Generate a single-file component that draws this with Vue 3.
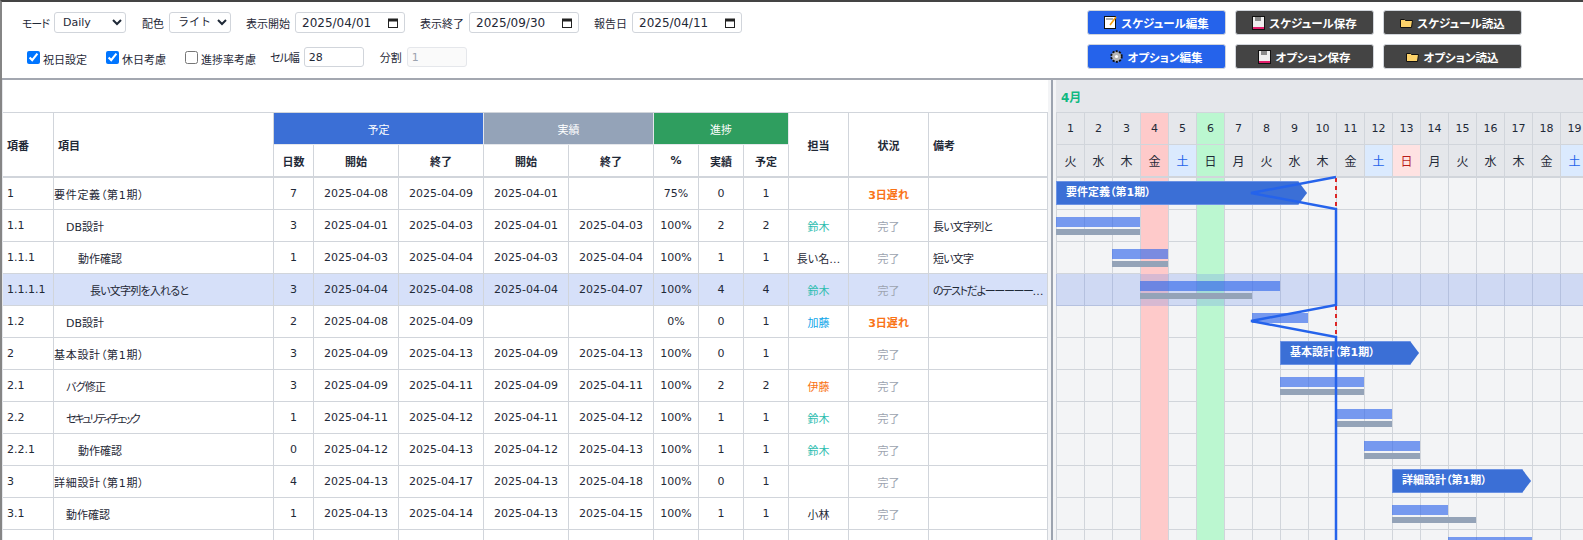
<template>
  <div class="app">
    <header class="toolbar">
      <div class="controls">
        <div class="row">
          <label class="lbl mode-lbl">モード</label>
          <select class="sel mode"><option>Daily</option></select>
          <label class="lbl">配色</label>
          <select class="sel theme"><option>ライト</option></select>
          <template v-for="d in dates" :key="d.label">
            <label class="lbl">{{ d.label }}</label>
            <span class="date">
              <input class="inp" type="text" :value="d.value">
              <svg class="cal" viewBox="0 0 10 10" width="10" height="10">
                <rect x="0.5" y="1" width="9" height="8.5" fill="none" stroke="#222" />
                <rect x="0.5" y="1" width="9" height="2.5" fill="#222" />
              </svg>
            </span>
          </template>
        </div>
        <div class="row row2">
          <label class="chk"><input type="checkbox" checked>祝日設定</label>
          <label class="chk"><input type="checkbox" checked>休日考慮</label>
          <label class="chk"><input type="checkbox">進捗率考慮</label>
          <label class="lbl cell-lbl">セル幅</label>
          <input class="inp num-inp" type="text" value="28">
          <label class="lbl split-lbl">分割</label>
          <input class="inp num-inp off" type="text" value="1" disabled>
        </div>
      </div>
      <div class="actions">
        <button v-for="b in buttons" :key="b.text" class="btn" :class="b.cls">
          <svg v-if="b.icon === 'memo'" viewBox="0 0 13 13" width="13" height="13">
            <rect x="0.5" y="0.5" width="11" height="12" fill="#fff" stroke="#111" />
            <path d="M2 3h7" stroke="#999" stroke-width="1.5" />
            <path d="M12 1L6 9" stroke="#f59e0b" stroke-width="1.5" />
          </svg>
          <svg v-else-if="b.icon === 'gear'" viewBox="0 0 13 13" width="13" height="13">
            <circle cx="6.5" cy="6.5" r="5.2" fill="#aaa" stroke="#111" stroke-width="2" stroke-dasharray="2 1.3" />
            <circle cx="6.5" cy="6.5" r="4.2" fill="#b5b5b5" />
            <circle cx="6.5" cy="6.5" r="1.6" fill="#fff" />
          </svg>
          <svg v-else-if="b.icon === 'save'" viewBox="0 0 13 14" width="13" height="14">
            <rect x="0.5" y="0.5" width="12" height="13" fill="#eee" stroke="#111" />
            <rect x="3" y="1" width="6" height="4" fill="#8a8a8a" />
            <rect x="1" y="11" width="11" height="2" fill="#e11d6b" />
          </svg>
          <svg v-else viewBox="0 0 13 10" width="13" height="10">
            <path d="M0.5 1.5h4l1 1h7l-1 7h-11z" fill="#fcd26a" stroke="#111" />
          </svg>
          <span>{{ b.text }}</span>
        </button>
      </div>
    </header>

    <main class="main">
      <div class="table-pane">
        <table class="tbl">
          <colgroup>
            <col v-for="(w, i) in colWidths" :key="i" :style="{ width: w + 'px' }">
          </colgroup>
          <thead>
            <tr class="blank"><th colspan="14"></th></tr>
            <tr>
              <th rowspan="2" class="left">項番</th>
              <th rowspan="2" class="left">項目</th>
              <th colspan="3" class="grp plan">予定</th>
              <th colspan="2" class="grp actual">実績</th>
              <th colspan="3" class="grp prog">進捗</th>
              <th rowspan="2" class="last-h">担当</th>
              <th rowspan="2" class="last-h">状況</th>
              <th rowspan="2" class="left last-h">備考</th>
            </tr>
            <tr class="sub">
              <th>日数</th><th>開始</th><th>終了</th><th>開始</th><th>終了</th>
              <th>%</th><th>実績</th><th>予定</th>
            </tr>
          </thead>
          <tbody>
            <tr v-for="r in rows" :key="r.no" :class="{ picked: r.picked }">
              <td class="num no">{{ r.no }}</td>
              <td class="name" :class="r.nameCls" :style="{ paddingLeft: r.level * 12 + 'px' }">{{ r.name }}</td>
              <td class="num c">{{ r.days }}</td>
              <td class="num c">{{ r.ps }}</td>
              <td class="num c">{{ r.pe }}</td>
              <td class="num c">{{ r.as }}</td>
              <td class="num c">{{ r.ae }}</td>
              <td class="num c">{{ r.pct }}</td>
              <td class="num c">{{ r.act }}</td>
              <td class="num c">{{ r.plan }}</td>
              <td class="c" :class="r.ownerCls">{{ r.owner }}</td>
              <td class="c" :class="r.late ? 'late' : 'done'">{{ r.status }}</td>
              <td class="note" :class="r.picked ? 'note-long' : 'tight'">{{ r.note }}</td>
            </tr>
            <tr><td v-for="n in 13" :key="n"></td></tr>
          </tbody>
        </table>
      </div>

      <div class="splitter"></div>

      <section class="gantt">
        <div class="month"><span>4月</span></div>
        <div class="days">
          <div v-for="d in days" :key="d.n" class="day" :class="d.holiday">{{ d.n }}</div>
        </div>
        <div class="weeks">
          <div v-for="d in days" :key="d.n" class="wd" :class="d.holiday || d.weekend">{{ d.w }}</div>
        </div>
        <div class="body">
          <div v-for="n in 12" :key="n" class="grow">
            <div v-for="d in days" :key="d.n" class="gcell"></div>
          </div>
          <div class="col col-red"></div>
          <div class="col col-green"></div>
          <div class="pick-row"></div>

          <template v-for="b in bars" :key="b.row">
            <div
              v-if="b.summary"
              class="summary"
              :style="{ top: b.row * 32 + 3 + 'px', left: b.x * 28 + 'px', width: b.w * 28 - 1 + 'px' }"
            >{{ b.summary }}</div>
            <template v-else>
              <div class="bar" :style="{ top: b.row * 32 + 7 + 'px', left: b.x * 28 + 'px', width: b.w * 28 + 'px' }"></div>
              <div
                v-if="b.aw"
                class="bar-act"
                :style="{ top: b.row * 32 + 19 + 'px', left: b.x * 28 + 'px', width: b.aw * 28 + 'px' }"
              ></div>
            </template>
          </template>

          <svg class="lag" width="527" height="362">
            <line x1="280" y1="0" x2="280" y2="362" stroke="#dc2626" stroke-width="2" stroke-dasharray="4 4" />
            <polyline
              points="280,-1 195,15 280,31 280,127 195,143 280,159 280,362"
              fill="none"
              stroke="#2563eb"
              stroke-width="2.5"
            />
          </svg>
        </div>
      </section>
    </main>
  </div>
</template>

<script setup>
const dates = [
  { label: '表示開始', value: '2025/04/01' },
  { label: '表示終了', value: '2025/09/30' },
  { label: '報告日', value: '2025/04/11' }
]

const buttons = [
  { text: 'スケジュール編集', icon: 'memo', cls: 'blue' },
  { text: 'スケジュール保存', icon: 'save', cls: 'dark' },
  { text: 'スケジュール読込', icon: 'open', cls: 'dark' },
  { text: 'オプション編集', icon: 'gear', cls: 'blue' },
  { text: 'オプション保存', icon: 'save', cls: 'dark' },
  { text: 'オプション読込', icon: 'open', cls: 'dark' }
]

const colWidths = [51, 220, 40, 85, 85, 85, 85, 45, 45, 45, 60, 80, 119]

const d = s => (s ? '2025-04-' + s : '')
const row = (no, level, name, days, ps, pe, as, ae, pct, act, plan, owner, ownerCls, late, note = '', picked = false, nameCls = '') => ({
  no, level, name, days, ps: d(ps), pe: d(pe), as: d(as), ae: d(ae), pct, act, plan,
  owner, ownerCls, late, status: late ? '3日遅れ' : '完了', note, picked, nameCls
})

const rows = [
  row('1', 0, '要件定義（第1期）', 7, '08', '09', '01', '', '75%', 0, 1, '', '', true, '', false, 'wide'),
  row('1.1', 1, 'DB設計', 3, '01', '03', '01', '03', '100%', 2, 2, '鈴木', 'teal', false, '長い文字列と'),
  row('1.1.1', 2, '動作確認', 1, '03', '04', '03', '04', '100%', 1, 1, '長い名…', '', false, '短い文字'),
  row('1.1.1.1', 3, '長い文字列を入れると', 3, '04', '08', '04', '07', '100%', 4, 4, '鈴木', 'teal', false, 'のテストだよーーーーー…', true, 'tight'),
  row('1.2', 1, 'DB設計', 2, '08', '09', '', '', '0%', 0, 1, '加藤', 'sky', true),
  row('2', 0, '基本設計（第1期）', 3, '09', '13', '09', '13', '100%', 0, 1, '', '', false, '', false, 'wide'),
  row('2.1', 1, 'バグ修正', 3, '09', '11', '09', '11', '100%', 2, 2, '伊藤', 'orange', false, '', false, 'tight'),
  row('2.2', 1, 'セキュリティチェック', 1, '11', '12', '11', '12', '100%', 1, 1, '鈴木', 'teal', false, '', false, 'tighter'),
  row('2.2.1', 2, '動作確認', 0, '12', '13', '12', '13', '100%', 1, 1, '鈴木', 'teal', false),
  row('3', 0, '詳細設計（第1期）', 4, '13', '17', '13', '18', '100%', 0, 1, '', '', false, '', false, 'wide'),
  row('3.1', 1, '動作確認', 1, '13', '14', '13', '15', '100%', 1, 1, '小林', '', false)
]

const names = ['火', '水', '木', '金', '土', '日', '月']
const days = Array.from({ length: 19 }, (_, i) => {
  const n = i + 1
  const w = names[i % 7]
  return {
    n,
    w,
    holiday: n === 4 ? 'red' : n === 6 ? 'green' : '',
    weekend: w === '土' ? 'sat' : w === '日' ? 'sun' : ''
  }
})

const bars = [
  { row: 0, x: 0, w: 9, summary: '要件定義（第1期）' },
  { row: 1, x: 0, w: 3, aw: 3 },
  { row: 2, x: 2, w: 2, aw: 2 },
  { row: 3, x: 3, w: 5, aw: 4 },
  { row: 4, x: 7, w: 2 },
  { row: 5, x: 8, w: 5, summary: '基本設計（第1期）' },
  { row: 6, x: 8, w: 3, aw: 3 },
  { row: 7, x: 10, w: 2, aw: 2 },
  { row: 8, x: 11, w: 2, aw: 2 },
  { row: 9, x: 12, w: 5, summary: '詳細設計（第1期）' },
  { row: 10, x: 12, w: 2, aw: 3 },
  { row: 11, x: 14, w: 3 }
]
</script>

<style scoped>
.app {
  height: 540px;
  box-sizing: border-box;
  overflow: hidden;
  border-top: 2px solid #444;
  border-left: 2px solid #858585;
  font-family: "DejaVu Sans", "Noto Sans CJK JP", sans-serif;
  font-feature-settings: "palt";
  font-size: 11px;
  color: #1f2937;
  background: #fff;
}

.toolbar {
  height: 78px;
  box-sizing: border-box;
  border-bottom: 2px solid #a3a7b0;
  display: flex;
  justify-content: space-between;
  padding: 10px 61px 0 20px;
}

.row {
  display: flex;
  align-items: center;
  height: 21px;
}

.row2 {
  height: 20px;
  margin-top: 14px;
  margin-left: 5px;
}

.lbl {
  margin-right: 5px;
  white-space: nowrap;
}

.mode-lbl,
.cell-lbl {
  letter-spacing: -1px;
}

.sel,
.inp {
  height: 21px;
  box-sizing: border-box;
  border: 1px solid #d1d5db;
  border-radius: 3px;
  background: #fff;
  color: #1f2937;
  font-family: "DejaVu Sans", "Noto Sans CJK JP", sans-serif;
  font-size: 12px;
}

.sel {
  padding-left: 4px;
  margin-right: 16px;
  font-size: 11px;
}

.mode { width: 72px; }
.theme { width: 62px; margin-right: 15px; }

.date {
  position: relative;
  display: flex;
  margin-right: 15px;
}

.date .inp {
  width: 110px;
  padding-left: 6px;
}

.cal {
  position: absolute;
  top: 6px;
  right: 7px;
}

.chk {
  display: flex;
  align-items: center;
  margin-right: 19px;
  padding-top: 4px;
  white-space: nowrap;
}

.chk:nth-child(3) {
  margin-right: 14px;
}

.chk input {
  margin: -4px 3px 0 0;
}

.num-inp {
  width: 60px;
  height: 20px;
  padding-left: 4px;
  font-size: 11px;
}

.split-lbl {
  margin-left: 16px;
}

.off {
  background: #fafafa;
  border-color: #e5e7eb;
  color: #9ca3af;
}

.actions {
  display: grid;
  grid-template-columns: repeat(3, 139px);
  grid-auto-rows: 25px;
  gap: 9px;
  margin-top: -2px;
}

.btn {
  display: flex;
  align-items: center;
  justify-content: center;
  gap: 4px;
  padding: 0;
  border: 1px solid #d1d5db;
  border-radius: 3px;
  color: #fff;
  font-family: "DejaVu Sans", "Noto Sans CJK JP", sans-serif;
  font-feature-settings: "palt";
  font-size: 11.5px;
  font-weight: 700;
}

.blue { background: #2563eb; }
.dark { background: #444; }

.main {
  display: flex;
  height: 460px;
  overflow: hidden;
  background: #f3f4f6;
}

.table-pane {
  flex: none;
  width: 1046px;
  padding-left: 1px;
  box-sizing: border-box;
  overflow: hidden;
  background: linear-gradient(90deg, #e5e7eb 1px, #fff 1px);
}

.tbl {
  width: 1045px;
  table-layout: fixed;
  border-collapse: separate;
  border-spacing: 0;
}

.tbl th,
.tbl td {
  box-sizing: border-box;
  height: 32px;
  padding: 0;
  border-right: 1px solid #d1d5db;
  border-bottom: 1px solid #d1d5db;
  overflow: hidden;
  white-space: nowrap;
}

.tbl th {
  font-weight: 700;
  text-align: center;
}

.tbl .left {
  text-align: left;
  padding-left: 4px;
}

.tbl .blank th {
  height: 33px;
  border-right: 0;
}

.tbl .grp {
  color: #fff;
  font-weight: 400;
  border-color: #e5e7eb;
}

.plan { background: #3b6fd6; }
.actual { background: #94a3b8; }
.prog { background: #2f9e5f; }

.tbl .sub th,
.tbl th[rowspan] {
  border-bottom-width: 2px;
}

.tbl .sub th {
  height: 33px;
}

.tbl tbody tr.picked td {
  background: #d6e0f9;
}

.num {
  font-size: 11px;
}

.no {
  padding-left: 4px !important;
}

.c {
  text-align: center;
}

.note {
  padding: 0 4px !important;
}

.wide { letter-spacing: 0.7px; }
.tight { letter-spacing: -0.8px; }
.tighter { letter-spacing: -2.2px; }
.note-long { letter-spacing: -1.3px; }

.teal { color: #2ebdb0; }
.sky { color: #0ea5e9; }
.orange { color: #f97316; }
.late { color: #f97316; font-weight: 700; }
.done { color: #9ca3af; }

.splitter {
  flex: none;
  width: 2px;
  margin: 0 3px;
  background: #9ca3af;
}

.gantt {
  flex: 1;
  min-width: 0;
  overflow: hidden;
}

.month {
  height: 33px;
  box-sizing: border-box;
  padding: 11px 0 0 5px;
  border-bottom: 1px solid #d1d5db;
  background: #e5e7eb;
  color: #10b981;
  font-weight: 700;
  font-size: 12px;
  line-height: 14px;
}

.days,
.weeks {
  display: flex;
}

.day,
.wd {
  flex: none;
  width: 28px;
  box-sizing: border-box;
  display: flex;
  align-items: center;
  justify-content: center;
  border-left: 1px solid #d1d5db;
  background: #e5e7eb;
}

.day {
  height: 32px;
  border-bottom: 1px solid #d1d5db;
  font-size: 11px;
}

.wd {
  height: 33px;
  border-bottom: 2px solid #d1d5db;
  font-size: 12px;
}

.red { background: #fecaca; }
.green { background: #bbf7d0; }
.sat { background: #dbeafe; color: #2563eb; }
.sun { background: #fee2e2; color: #b91c1c; }

.body {
  position: relative;
}

.grow {
  display: flex;
  height: 32px;
  box-sizing: border-box;
  border-bottom: 1px solid #d1d5db;
}

.gcell {
  flex: none;
  width: 28px;
  box-sizing: border-box;
  border-left: 1px solid #d1d5db;
}

.col {
  position: absolute;
  top: 0;
  bottom: 0;
  width: 27px;
}

.col-red {
  left: 85px;
  background: #fecaca;
}

.col-green {
  left: 141px;
  background: #bbf7d0;
}

.pick-row {
  position: absolute;
  top: 96px;
  left: 0;
  right: 0;
  height: 32px;
  background: rgba(100, 135, 235, 0.25);
}

.summary {
  position: absolute;
  height: 24px;
  box-sizing: border-box;
  padding-left: 9px;
  border: 1px solid #6d93e4;
  background: #3b6fd6;
  color: #fff;
  font-size: 11px;
  font-weight: 700;
  line-height: 21px;
  white-space: nowrap;
  clip-path: polygon(0 0, calc(100% - 9px) 0, 100% 50%, calc(100% - 9px) 100%, 0 100%);
}

.bar {
  position: absolute;
  height: 10px;
  background: rgba(50, 105, 235, 0.65);
}

.bar-act {
  position: absolute;
  height: 6px;
  background: #94a3b8;
}

.lag {
  position: absolute;
  top: 0;
  left: 0;
  overflow: visible;
}
</style>

<style>
body {
  margin: 0;
  overflow: hidden;
}
</style>
